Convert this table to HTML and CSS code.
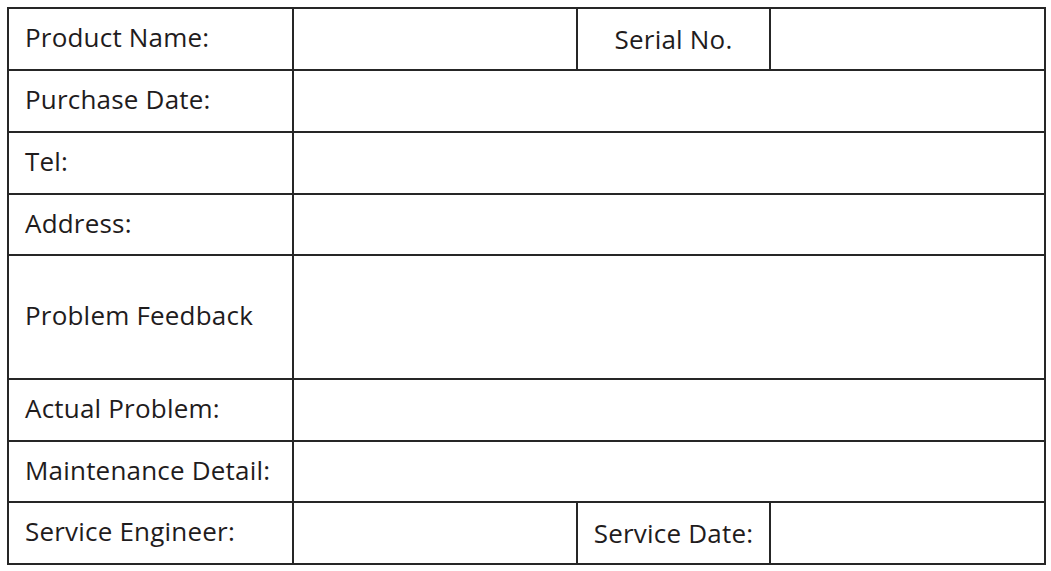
FILE: index.html
```html
<!DOCTYPE html>
<html lang="en">
<head>
<meta charset="utf-8">
<title>Service Form</title>
<link rel="stylesheet" href="styles.css">
</head>
<body>
<div class="form">
  <div class="cell label">Product Name:</div>
  <div class="cell"></div>
  <div class="cell center">Serial No.</div>
  <div class="cell"></div>

  <div class="cell label">Purchase Date:</div>
  <div class="cell span3"></div>

  <div class="cell label">Tel:</div>
  <div class="cell span3"></div>

  <div class="cell label">Address:</div>
  <div class="cell span3"></div>

  <div class="cell label">Problem Feedback</div>
  <div class="cell span3"></div>

  <div class="cell label">Actual Problem:</div>
  <div class="cell span3"></div>

  <div class="cell label">Maintenance Detail:</div>
  <div class="cell span3"></div>

  <div class="cell label">Service Engineer:</div>
  <div class="cell"></div>
  <div class="cell center">Service Date:</div>
  <div class="cell"></div>
</div>
</body>
</html>
```

FILE: styles.css
```css
html, body {
  margin: 0;
  padding: 0;
  background: #ffffff;
}

body {
  padding: 7px 0 0 7px;
  font-family: "Open Sans", "Noto Sans", sans-serif;
  color: #1f1c1d;
}

.form {
  display: grid;
  width: max-content;
  grid-template-columns: 283px 282px 191px 273px;
  grid-template-rows: 60px 60px 60px 59px 122px 60px 59px 60px;
  gap: 2px;
  padding: 2px;
  background: #262626;
}

.cell {
  background: #ffffff;
  display: flex;
  align-items: center;
  font-size: 26px;
  font-weight: 500;
  letter-spacing: 0.2px;
  line-height: 1;
  white-space: nowrap;
}

.label {
  padding: 0 0 4px 16px;
}

.center {
  justify-content: center;
}

.span3 {
  grid-column: span 3;
}
```
